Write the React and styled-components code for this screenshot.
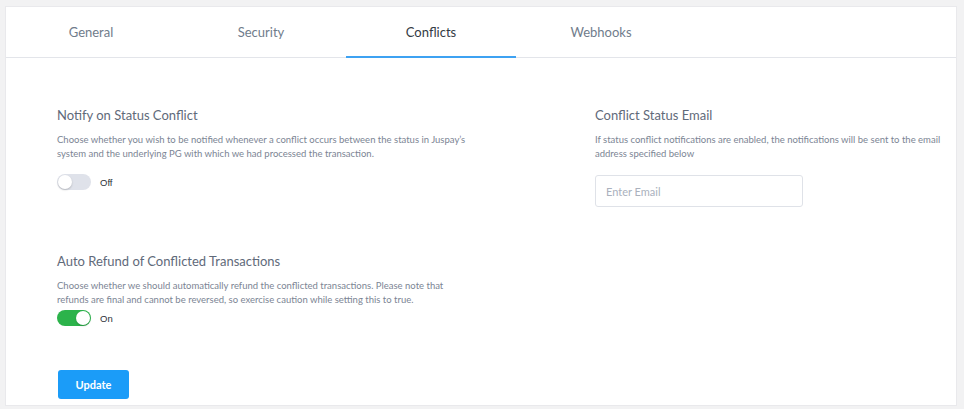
import React, { useState } from 'react';
import styled, { createGlobalStyle } from 'styled-components';

const GlobalStyle = createGlobalStyle`
    body {
        margin: 0;
        background-color: #f2f2f3;
        font-family: "Source Sans Pro", Lato, "Noto Sans", sans-serif;
    }
`

const Page = styled.div`
    padding: 6px 7px 3px 5px;
    height: 409px;
    box-sizing: border-box;
`

const Card = styled.div`
    background-color: white;
    border: 1px solid #e9e9ec;
    height: 100%;
    box-sizing: border-box;
    display: flex;
    flex-direction: column;
`

const TabBar = styled.div`
    display: flex;
    height: 50px;
    border-bottom: 1px solid #e3e5ea;
`

const Tab = styled.div`
    width: 170px;
    display: flex;
    align-items: center;
    justify-content: center;
    font-size: 13px;
    color: ${({active}) => active ? "#333a44" : "#707c8b"};
    border-bottom: 2px solid ${({active}) => active ? "#3ea2f2" : "transparent"};
    margin-bottom: -1px;
    cursor: pointer;
`

const Body = styled.div`
    display: grid;
    grid-template-columns: 538px 1fr;
    padding: 48px 0 0 51px;
`

const Column = styled.div`
    display: flex;
    flex-direction: column;
`

const Section = styled.div`
    display: flex;
    flex-direction: column;
    margin-bottom: ${({bottom}) => bottom || "0"};
`

const Heading = styled.h3`
    margin: 0;
    font-size: 13px;
    font-weight: 400;
    color: #5f6a7a;
    line-height: 18px;
`

const Desc = styled.p`
    margin: 9px 0 0;
    font-size: 9.5px;
    line-height: 14px;
    color: #7c8594;
    max-width: ${({width}) => width || "none"};
`

const ToggleRow = styled.div`
    display: flex;
    align-items: center;
    margin-top: ${({top}) => top || "13px"};
`

const Track = styled.button`
    width: 34px;
    height: 16px;
    border-radius: 8px;
    border: none;
    padding: 0;
    position: relative;
    cursor: pointer;
    background-color: ${({on}) => on ? "#2cb34b" : "#dfe2ea"};
`

const Knob = styled.span`
    position: absolute;
    top: 1px;
    left: ${({on}) => on ? "19px" : "1px"};
    width: 14px;
    height: 14px;
    border-radius: 50%;
    background-color: white;
    box-shadow: 0 1px 2px rgba(0,0,0,0.2);
`

const ToggleLabel = styled.span`
    margin-left: 9px;
    font-size: 9.5px;
    color: #2c3038;
    font-family: "Liberation Sans", Arial, sans-serif;
`

const EmailInput = styled.input`
    margin-top: 14px;
    width: 208px;
    height: 32px;
    box-sizing: border-box;
    border: 1px solid #dfe2e8;
    border-radius: 3px;
    padding: 0 10px;
    font-family: inherit;
    font-size: 11px;
    color: #333;
    outline: none;

    &::placeholder {
        color: #aab1bd;
    }
`

const Button = styled.button`
    width: 71px;
    height: 29px;
    background-color: #1b9cf8;
    color: white;
    border: none;
    border-radius: 3px;
    font-family: inherit;
    font-size: 11px;
    font-weight: 700;
    cursor: pointer;
    align-self: flex-start;
    margin-left: 1px;
`

function Toggle({on, onClick, top}){
    return(
        <ToggleRow top={top}>
            <Track on={on} onClick={onClick}>
                <Knob on={on}/>
            </Track>
            <ToggleLabel>{on ? "On" : "Off"}</ToggleLabel>
        </ToggleRow>
    )
}

const tabs = ["General", "Security", "Conflicts", "Webhooks"]

export default function App(){
    const [active, setActive] = useState("Conflicts")
    const [notify, setNotify] = useState(false)
    const [refund, setRefund] = useState(true)
    const [email, setEmail] = useState("")

    return(
        <Page>
            <GlobalStyle/>
            <Card>
                <TabBar>
                    {tabs.map(tab => (
                        <Tab key={tab} active={tab === active} onClick={() => setActive(tab)}>{tab}</Tab>
                    ))}
                </TabBar>
                <Body>
                    <Column>
                        <Section bottom="62px">
                            <Heading>Notify on Status Conflict</Heading>
                            <Desc width="420px">Choose whether you wish to be notified whenever a conflict occurs between the status in Juspay’s system and the underlying PG with which we had processed the transaction.</Desc>
                            <Toggle on={notify} onClick={() => setNotify(!notify)}/>
                        </Section>
                        <Section bottom="44px">
                            <Heading>Auto Refund of Conflicted Transactions</Heading>
                            <Desc width="420px">Choose whether we should automatically refund the conflicted transactions. Please note that refunds are final and cannot be reversed, so exercise caution while setting this to true.</Desc>
                            <Toggle on={refund} onClick={() => setRefund(!refund)} top="3px"/>
                        </Section>
                        <Button>Update</Button>
                    </Column>
                    <Column>
                        <Heading>Conflict Status Email</Heading>
                        <Desc width="360px">If status conflict notifications are enabled, the notifications will be sent to the email address specified below</Desc>
                        <EmailInput placeholder="Enter Email" value={email} onChange={(e) => setEmail(e.target.value)}/>
                    </Column>
                </Body>
            </Card>
        </Page>
    )
}
